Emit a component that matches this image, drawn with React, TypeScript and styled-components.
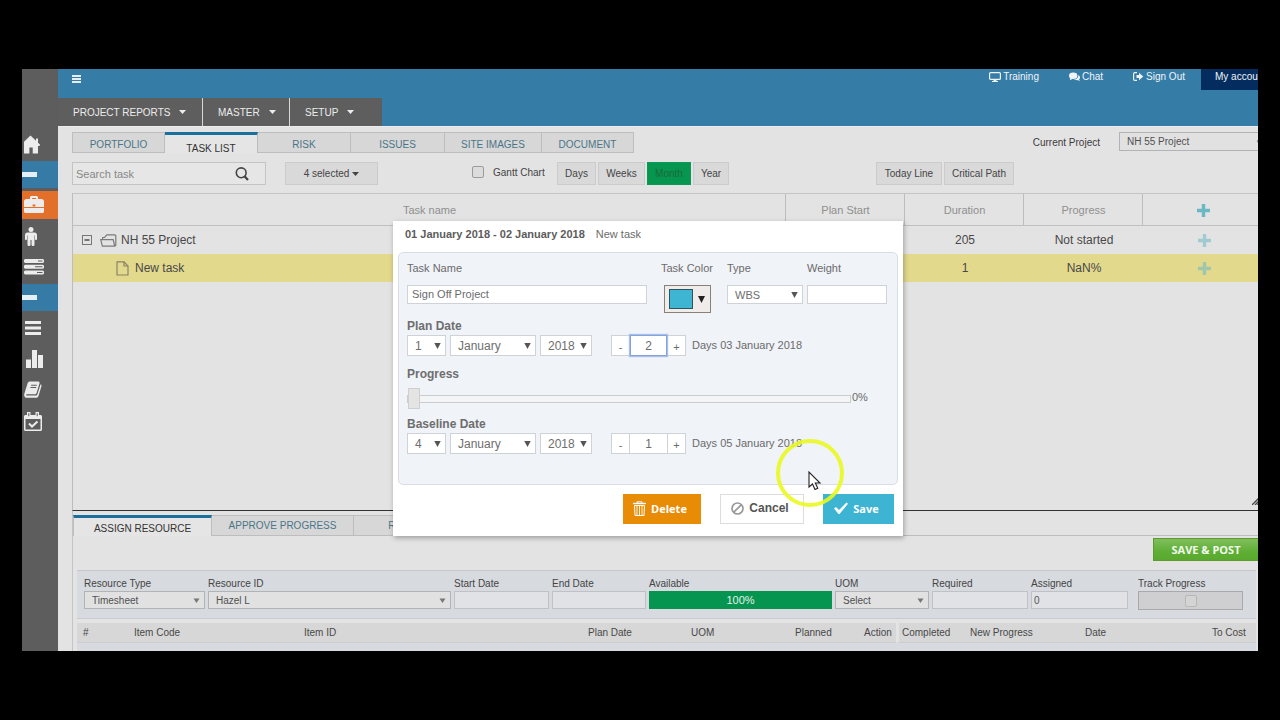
import React from 'react';
import styled, { createGlobalStyle, css } from 'styled-components';

const GlobalStyle = createGlobalStyle`
  *, *::before, *::after { box-sizing: border-box; }
  body { margin: 0; background: #000; }
  body, button, input, select, textarea {
    font-family: "Liberation Sans", Arial, sans-serif;
  }
  button, input, select { margin: 0; padding: 0; border-radius: 0; }
  a { text-decoration: none; color: inherit; }
`;

const Page = styled.div`
  min-height: 100vh;
  padding: 69px 22px;
  background: #000;
`;

const Frame = styled.div`
  position: relative;
  display: flex;
  overflow: hidden;
  background: #e3e3e3;
  font-size: 10px;
  line-height: 14px;
  color: #444;
`;

/* ---------- sidebar ---------- */

const Sidebar = styled.nav`
  flex: none;
  width: 36px;
  padding-top: 61px;
  display: flex;
  flex-direction: column;
  gap: 3px;
  background: #5d5d5d;
`;

const SideLink = styled.a<{ $active?: boolean }>`
  display: flex;
  align-items: center;
  height: 28px;
  padding-left: 2px;
  color: #ececec;
  background: ${p => (p.$active ? '#e2702a' : 'transparent')};
  svg { display: block; }
`;

const SideSection = styled.button`
  display: flex;
  align-items: center;
  height: 27px;
  border: 0;
  background: #357ba5;
  &::before {
    content: '';
    width: 15px;
    height: 5px;
    background: #e4eef4;
  }
`;

/* ---------- header ---------- */

const Body = styled.div`
  flex: 1;
  min-width: 0;
`;

const Header = styled.header`
  background: #357ca7;
  color: #f0f4f7;
`;

const TopBar = styled.div`
  display: flex;
  align-items: flex-start;
  height: 29px;
  padding-left: 14px;
`;

const MenuButton = styled.button`
  height: 20px;
  border: 0;
  background: none;
  color: #e6eef3;
  svg { display: block; }
`;

const TopLinks = styled.div`
  margin-left: auto;
  display: flex;
  gap: 30px;
`;

const TopLink = styled.a`
  display: flex;
  align-items: center;
  height: 15px;
  gap: 2px;
`;

const Account = styled.a`
  width: 57px;
  height: 21px;
  margin-left: 16px;
  padding-left: 14px;
  overflow: hidden;
  white-space: nowrap;
  line-height: 15px;
  background: #042c5e;
`;

const Menu = styled.nav`
  display: flex;
  height: 28px;
`;

const MenuItem = styled.button<{ $width: number }>`
  display: flex;
  align-items: center;
  gap: 9px;
  width: ${p => p.$width}px;
  padding-left: 15px;
  border: 0;
  background: #5e5e5e;
  color: #ececec;
  font-size: 10px;
  white-space: nowrap;
  & + & { border-left: 1px solid #d8d8d8; }
`;

/* ---------- tabs and toolbar ---------- */

const Main = styled.main`
  border-top: 1px solid #ebebf0;
  padding-left: 14px;
`;

const Tab = styled.button<{ $width: number; $active?: boolean; $low?: boolean }>`
  width: ${p => p.$width}px;
  height: 21px;
  border: 1px solid #bdbdbd;
  border-left-width: 0;
  background: #d7d7d7;
  color: #4b7587;
  font-size: 10px;
  line-height: 14px;
  padding-top: ${p => (p.$low ? 4 : 1)}px;
  white-space: nowrap;
  &:first-child { border-left-width: 1px; }
  ${p => p.$active && css`
    border-top: 3px solid #1a709c;
    border-bottom: 0;
    background: #e5e5e5;
    color: #333;
    padding-top: ${p.$low ? 7 : 4}px;
  `}
`;

const TabLine = styled.div`
  display: flex;
  align-items: stretch;
  padding-top: 5px;
`;

const TabFill = styled.div`
  flex: 1;
  border-bottom: 1px solid #bdbdbd;
`;

const ProjectPicker = styled.div`
  display: flex;
  gap: 19px;
  margin-left: auto;
  margin-right: -10px;
  line-height: 21px;
  color: #3c3c3c;
`;

const Toolbar = styled.div`
  display: flex;
  align-items: center;
  height: 23px;
  margin: 9px 0 8px;
`;

const SearchBox = styled.div`
  display: flex;
  align-items: center;
  width: 194px;
  height: 23px;
  padding-right: 16px;
  border: 1px solid #c4c4c4;
  background: #e6e6e6;
  color: #444;
`;

const SearchInput = styled.input`
  flex: 1;
  min-width: 0;
  padding-left: 3px;
  border: 0;
  outline: 0;
  background: none;
  font-size: 11px;
  &::placeholder { color: #888; opacity: 1; }
`;

const IconButton = styled.button`
  display: flex;
  border: 0;
  background: none;
  color: inherit;
`;

const GreyButton = styled.button<{ $width: number; $on?: boolean }>`
  display: flex;
  align-items: center;
  justify-content: center;
  gap: 3px;
  width: ${p => p.$width}px;
  height: 23px;
  border: 1px solid ${p => (p.$on ? '#0a9a58' : '#cbcbcb')};
  background: ${p => (p.$on ? '#06964f' : '#d9d9d9')};
  color: ${p => (p.$on ? '#1a6a3c' : '#444')};
  font-size: 10px;
  white-space: nowrap;
`;

const ButtonSet = styled.div<{ $before: number }>`
  display: flex;
  gap: 2px;
  margin-left: ${p => p.$before}px;
`;

const Check = styled.input`
  appearance: none;
  width: 12px;
  height: 12px;
  border: 1px solid #9b9b9b;
  border-radius: 2px;
  background: #dcdcdc;
`;

const ChartToggle = styled.label`
  display: flex;
  align-items: flex-start;
  gap: 9px;
  width: 85px;
  margin-left: 94px;
  height: 16px;
  white-space: nowrap;
`;

/* ---------- task grid ---------- */

const TaskArea = styled.section`
  position: relative;
  height: 317px;
  border-left: 1px solid #bcbcbc;
  border-top: 1px solid #c4c4c4;
  margin-right: -5px;
`;

const TaskTable = styled.table`
  width: 100%;
  border-collapse: separate;
  border-spacing: 0;
  table-layout: fixed;
  text-align: center;
  th {
    height: 32px;
    padding: 0 0 0 1px;
    border-bottom: 1px solid #c0c0c0;
    font-size: 11px;
    font-weight: 400;
    color: #8f8f8f;
  }
  th + th { border-left: 1px solid #bdbdbd; }
  td {
    height: 28px;
    padding: 0;
    font-size: 12px;
    color: #484848;
  }
  td + td { padding-left: 3px; }
  svg { vertical-align: middle; }
`;

const TaskRow = styled.tr<{ $selected?: boolean }>`
  background: ${p => (p.$selected ? '#e3d98d' : 'transparent')};
`;

const NameCell = styled.div<{ $level: number }>`
  display: flex;
  align-items: center;
  gap: ${p => (p.$level ? 6 : 4)}px;
  padding-left: ${p => (p.$level ? 43 : 9)}px;
  svg + svg { margin-left: 4px; }
`;

const AddButton = styled.button<{ $soft?: boolean }>`
  border: 0;
  background: none;
  color: #6bb8c4;
  opacity: ${p => (p.$soft ? 0.55 : 1)};
`;

const ResizeGrip = styled.svg`
  position: absolute;
  right: 4px;
  bottom: 5px;
`;

/* ---------- resources ---------- */

const Resources = styled.section`
  border-top: 1px solid #333;
  border-left: 1px solid #c4c4c4;
  padding-right: 2px;
`;

const ResourceTabs = styled.div`
  display: flex;
  padding-top: 4px;
  margin-right: -2px;
`;

const PostLine = styled.div`
  display: flex;
  justify-content: flex-end;
  height: 34px;
  padding-top: 2px;
  margin-right: -3px;
`;

const PostButton = styled.button`
  width: 106px;
  height: 23px;
  border: 1px solid #5d9c2a;
  background: linear-gradient(#7fbf5d, #5fae35 60%, #5aa92f);
  color: #f1f8ec;
  font: 700 11px "Open Sans", sans-serif;
`;

const ResourceForm = styled.form`
  display: grid;
  grid-template-columns: 121fr 243fr 95fr 94fr 183fr 94fr 96fr 97fr 112fr;
  column-gap: 3px;
  margin-left: 4px;
  padding: 6px 13px 8px 7px;
  border-top: 1px solid #c4c6c9;
  border-bottom: 1px solid #c9cbce;
  background: #d7dadf;
`;

const ResField = styled.div<{ $indent?: boolean }>`
  display: flex;
  flex-direction: column;
  min-width: 0;
  padding-left: ${p => (p.$indent ? 7 : 0)}px;
  white-space: nowrap;
`;

const ResInput = styled.input`
  width: 100%;
  height: 18px;
  padding-left: 2px;
  border: 1px solid #bfc1c4;
  background: #e0e2e5;
  font-size: 10px;
  color: #555;
`;

const Available = styled.output`
  display: block;
  height: 18px;
  line-height: 18px;
  text-align: center;
  background: #069551;
  color: #e2f2ea;
  font-size: 11px;
`;

const TrackBox = styled.div`
  display: flex;
  align-items: center;
  justify-content: center;
  height: 19px;
  border: 1px solid #a9a9ab;
  background: #cfcfd1;
  input { opacity: 0.45; }
`;

const ItemTable = styled.table`
  width: calc(100% - 4px);
  margin: 4px 0 0 4px;
  border-collapse: separate;
  border-spacing: 0;
  table-layout: fixed;
  th {
    height: 20px;
    padding: 0 0 0 6px;
    border-bottom: 1px solid #cdcdcf;
    background: #d7d7d7;
    font-size: 10px;
    font-weight: 400;
    text-align: left;
    white-space: nowrap;
    color: #484848;
  }
  th:nth-child(8) {
    padding-left: 3px;
    border-left: 3px solid #e3e3e3;
  }
  td {
    height: 8px;
    padding: 0;
    background: #d7dadf;
  }
`;

/* ---------- drop-downs ---------- */

const SelectWrap = styled.span<{ $width?: number; $height: number }>`
  position: relative;
  display: block;
  width: ${p => (p.$width ? p.$width + 'px' : '100%')};
  height: ${p => p.$height}px;
  svg {
    position: absolute;
    right: 5px;
    top: 50%;
    transform: translateY(-50%);
    pointer-events: none;
  }
`;

const NativeSelect = styled.select<{ $tone: 'page' | 'dialog'; $size: number }>`
  appearance: none;
  display: block;
  width: 100%;
  height: 100%;
  padding-left: 7px;
  font-size: ${p => p.$size}px;
  border: 1px solid ${p => (p.$tone === 'page' ? '#b2b3b5' : '#cfd2d6')};
  background: ${p => (p.$tone === 'page' ? '#e1e1e2' : '#fff')};
  color: ${p => (p.$tone === 'page' ? '#505050' : '#6e6e6e')};
`;

type DropProps = {
  id?: string;
  label?: string;
  value: string;
  width?: number;
  height: number;
  size: number;
  tone: 'page' | 'dialog';
};

const Drop = ({ id, label, value, width, height, size, tone }: DropProps) => (
  <SelectWrap $width={width} $height={height}>
    <NativeSelect id={id} aria-label={label} $tone={tone} $size={size} defaultValue={value}>
      <option>{value}</option>
    </NativeSelect>
    <svg width="7" height="6" viewBox="0 0 7 6">
      {tone === 'page'
        ? <path d="M.5 1.500h6L3.500 6z" fill="#777" />
        : <path d="M.3 0h6.400L3.500 6z" fill="#555" />}
    </svg>
  </SelectWrap>
);

/* ---------- dialog ---------- */

const Dialog = styled.div`
  position: absolute;
  top: 152px;
  left: 371px;
  width: 510px;
  padding: 0 5px 12px;
  background: #fff;
  box-shadow: 1px 2px 5px rgba(0, 0, 0, 0.3);
  font-size: 11px;
  color: #6b6b6b;
`;

const DialogTitle = styled.h2`
  display: flex;
  gap: 11px;
  height: 31px;
  margin: 0;
  padding: 6px 7px 0;
  font-size: 11px;
  font-weight: 400;
  line-height: 14px;
  strong { color: #5c5c5c; }
`;

const DialogPanel = styled.div`
  padding: 8px 9px 30px 8px;
  border: 1px solid #d9dee6;
  border-radius: 5px;
  background: #f0f3f8;
`;

const TopFields = styled.div`
  display: flex;
  align-items: flex-start;
  height: 52px;
`;

const Field = styled.div<{ $width: number; $after?: number; $inset?: number }>`
  display: flex;
  flex-direction: column;
  align-items: flex-start;
  gap: 10px;
  width: ${p => p.$width}px;
  margin-right: ${p => p.$after || 0}px;
  & > button { margin-left: ${p => p.$inset || 0}px; }
`;

const TextInput = styled.input`
  width: 100%;
  height: 19px;
  padding: 0 0 2px 4px;
  border: 1px solid #cfd2d6;
  background: #fff;
  color: #6b6b6b;
  font-size: 11px;
`;

const ColorButton = styled.button`
  display: flex;
  align-items: center;
  gap: 5px;
  width: 47px;
  height: 28px;
  padding-left: 4px;
  border: 1px solid #8b7f7a;
  background: #f0ece9;
  &::before {
    content: '';
    width: 24px;
    height: 20px;
    border: 1px solid #2c5561;
    background: #3db5d3;
  }
`;

const Group = styled.fieldset<{ $before: number }>`
  min-width: 0;
  margin: ${p => p.$before}px 0 0;
  padding: 0;
  border: 0;
  legend {
    padding: 0;
    height: 16px;
    font-size: 12px;
    font-weight: 700;
    line-height: 14px;
    color: #6e6e6e;
  }
`;

const DateLine = styled.div`
  display: flex;
  align-items: center;
  height: 21px;
  gap: 4px;
`;

const EndDate = styled.span`
  padding-bottom: 2px;
`;

const Stepper = styled.div`
  display: flex;
  height: 21px;
  margin: 0 2px 0 15px;
`;

const StepButton = styled.button`
  width: 19px;
  height: 21px;
  padding-top: 3px;
  border: 1px solid #cfd2d6;
  background: #fff;
  color: #6b6b6b;
  font-size: 11px;
`;

const StepInput = styled.input<{ $focused?: boolean }>`
  width: 37px;
  height: 21px;
  text-align: center;
  border: 1px solid #cfd2d6;
  border-width: 1px 0;
  background: #fff;
  color: #6b6b6b;
  font-size: 12px;
  ${p => p.$focused && css`
    border: 1px solid #86a4dc;
    box-shadow: 0 0 1px 1px #a9bfe8;
    z-index: 1;
  `}
`;

const SliderLine = styled.div`
  display: flex;
  align-items: center;
  height: 21px;
  margin-top: 5px;
  output { padding: 0 0 4px 1px; }
`;

const Slider = styled.input`
  appearance: none;
  width: 444px;
  height: 21px;
  background: none;
  &::-webkit-slider-runnable-track {
    height: 8px;
    border: 1px solid #ccc;
    background: #f3f4f6;
  }
  &::-webkit-slider-thumb {
    appearance: none;
    width: 12px;
    height: 21px;
    margin-top: -8px;
    border: 1px solid #cfcfcf;
    background: #e4e4e4;
  }
`;

const Actions = styled.div`
  display: flex;
  justify-content: flex-end;
  gap: 19px;
  margin: 9px 4px 0 0;
`;

const ActionButton = styled.button<{ $kind: 'delete' | 'cancel' | 'save' }>`
  display: flex;
  align-items: center;
  justify-content: center;
  gap: 5px;
  height: 30px;
  width: ${p => ({ delete: 78, cancel: 84, save: 71 })[p.$kind]}px;
  border: 1px solid ${p => ({ delete: '#e88c05', cancel: '#ddd', save: '#3db4d2' })[p.$kind]};
  background: ${p => ({ delete: '#e88c05', cancel: '#fff', save: '#3db4d2' })[p.$kind]};
  color: ${p => (p.$kind === 'cancel' ? '#555' : '#fff')};
  font: 700 ${p => (p.$kind === 'cancel' ? '12px "Liberation Sans"' : '11px "Open Sans"')}, sans-serif;
  padding: 0 4px 2px 0;
`;

const ClickRing = styled.svg`
  position: absolute;
  left: 751px;
  top: 367px;
  pointer-events: none;
`;

/* ---------- icons ---------- */

const Caret = ({ w = 7 }: { w?: number }) => (
  <svg width={w} height="4" viewBox="0 0 8 4" preserveAspectRatio="none"><path d="M0 0h8L4 4z" fill="currentColor" /></svg>
);

const HomeIcon = () => (
  <svg width="18" height="19" viewBox="0 0 18 19">
    <path fill="currentColor" d="M6.500.5L12 5.700V3.500h2v4.200l2.200 2-.9 1.200H14V18.500H8.700v-6H5.400v6H0V6.700z" />
  </svg>
);
const BriefcaseIcon = () => (
  <svg width="20" height="18" viewBox="0 0 20 18">
    <path fill="currentColor" fillRule="evenodd" d="M6 3V1.500C6 .7 6.700 0 7.500 0h5c.8 0 1.500.7 1.500 1.500V3h3.500C18.900 3 20 4.100 20 5.500V11H0V5.500C0 4.100 1.100 3 2.500 3zM8 2v1h4V2zM8.600 8.500v2h2.800v-2z" />
    <path fill="currentColor" d="M0 12h20v3.500c0 .8-.7 1.500-1.500 1.500h-17C.7 17 0 16.300 0 15.500z" />
  </svg>
);
const PersonIcon = () => (
  <svg width="14" height="19" viewBox="-1 0 14 19">
    <circle cx="6" cy="2.500" r="2.500" fill="currentColor" />
    <path fill="currentColor" d="M2.500 5.500h7c1.400 0 2.500 1 2.500 2.500v4c0 1.400-2 1.400-2 0V8.500h-.5v9c0 2-3 2-3 0V13h-1v4.500c0 2-3 2-3 0v-9H2V12c0 1.400-2 1.400-2 0V8c0-1.500 1.100-2.500 2.500-2.500z" />
  </svg>
);
const ServerIcon = () => (
  <svg width="20" height="16" viewBox="0 0 20 16">
    <path fill="currentColor" d="M1 0h18l1 1v2l-1 1H1L0 3V1zM1 5.700h18l1 1v2l-1 1H1l-1-1v-2zM1 11.500h18l1 1v2l-1 1H1l-1-1v-2z" />
    <path fill="#5d5d5d" d="M14 1.500h4.500v1H14zM11 7.200h7.500v1H11zM13 13h5.500v1H13z" />
  </svg>
);
const ListIcon = () => (
  <svg width="18" height="14" viewBox="0 0 18 14"><path fill="currentColor" d="M1 0h16v3H1zM1 5.500h16v3H1zM1 11h16v3H1z" /></svg>
);
const ChartIcon = () => (
  <svg width="20" height="18" viewBox="0 0 20 18"><path fill="currentColor" d="M2 9.500h5V18H2zM8 0h5v18H8zM14 5h5v13h-5z" /></svg>
);
const BookIcon = () => (
  <svg width="18" height="18" viewBox="0 0 19 18">
    <path fill="currentColor" d="M6.500 0H15c1 0 1.700.9 1.400 1.900l-3.100 10.200c-.3.900-1 1.400-1.900 1.400H3c-.8 0-1.300 1-.2 1.400h9.500c.9 0 1.600-.5 1.900-1.300L17.500 3c1 .5 1.200 1.200.9 2l-3.200 10.600c-.3.900-1.200 1.600-2.200 1.600H3.100C1 17.200-.3 15.200.3 13.200L3.800 2C4.200.7 5.200 0 6.500 0z" />
    <path stroke="#5d5d5d" strokeWidth="1.100" d="M7.500 3.900h6M6.800 6.300h6" />
  </svg>
);
const CalendarIcon = () => (
  <svg width="18" height="19" viewBox="0 0 18 19">
    <path fill="currentColor" fillRule="evenodd" d="M1 3h16l1 1v14l-1 1H1l-1-1V4zM1.500 7V17.500h15V7z" />
    <path fill="currentColor" d="M3 0h3.500v5H3zM11.500 0H15v5h-3.500z" />
    <path stroke="#5d5d5d" d="M4.800 1.200v3M13.200 1.200v3" />
    <path fill="none" stroke="currentColor" strokeWidth="2" d="M5 11.500l3 3 5.500-5" />
  </svg>
);
const MonitorIcon = () => (
  <svg width="12" height="10" viewBox="0 0 12 10">
    <rect x=".6" y=".6" width="10.800" height="6.800" rx="1" fill="none" stroke="currentColor" strokeWidth="1.200" />
    <path fill="currentColor" d="M4.500 7.500h3v1.500H9v1H3V9h1.500z" />
  </svg>
);
const ChatIcon = () => (
  <svg width="11" height="10" viewBox="0 0 11 10">
    <ellipse cx="4.200" cy="3.800" rx="4.200" ry="3.200" fill="currentColor" />
    <path fill="currentColor" d="M1.500 5.500L.8 8.200 4 6.800zM9.200 3c2.200 1.200 2.300 3.200.8 4.300l.8 1.700-2.600-.9C6.800 8.300 5.500 8 5 7.600c2.500-.2 4.600-2 4.200-4.600z" />
  </svg>
);
const SignOutIcon = () => (
  <svg width="11" height="9" viewBox="0 0 11 9">
    <path fill="none" stroke="currentColor" strokeWidth="1.200" d="M4 .6H1.800C1.100.6.6 1.100.6 1.800v5.400c0 .7.500 1.200 1.200 1.200H4" />
    <path fill="currentColor" d="M3.500 3H6V.8l4.300 3.700L6 8.200V6H3.500z" />
  </svg>
);
const SearchIcon = () => (
  <svg width="14" height="14" viewBox="0 0 14 14" fill="none" stroke="currentColor">
    <circle cx="6.200" cy="5.800" r="4.900" strokeWidth="1.600" /><path strokeWidth="2.200" d="M9.300 9l3.700 4" />
  </svg>
);
const CollapseIcon = () => (
  <svg width="10" height="10" viewBox="0 0 10 10"><rect x=".5" y=".5" width="9" height="9" fill="none" stroke="#777" /><path stroke="#444" strokeWidth="1.400" d="M2.500 5h5" /></svg>
);
const FolderIcon = () => (
  <svg width="17" height="13" viewBox="0 0 17 13" fill="none" stroke="#7b7b7b" strokeWidth="1.200">
    <path d="M2.600 5V3.500h2L6.800.8h8l1 1v9.400l-1 1H2.400L.7 5.600h12.500l1.500 6.400" />
  </svg>
);
const FileIcon = () => (
  <svg width="13" height="15" viewBox="0 0 13 15" fill="none" stroke="#8a8365" strokeWidth="1.200">
    <path d="M1 .8h7L12 5v9H1z" /><path d="M8 .8V5h4" />
  </svg>
);
const PlusIcon = () => (
  <svg width="13" height="13" viewBox="0 0 13 13"><path fill="currentColor" d="M4.800 0h3.400v4.800H13v3.400H8.200V13H4.800V8.200H0V4.800h4.800z" /></svg>
);
const TrashIcon = () => (
  <svg width="13" height="15" viewBox="0 0 13 15" fill="none" stroke="currentColor">
    <path strokeWidth="1.400" d="M0 2.500h13" /><path d="M4 2.200V.8h5v1.400M1.500 4.500h10l-.5 10H2z" /><path strokeWidth=".9" d="M4 5v9M6.500 5v9M9 5v9" />
  </svg>
);
const BanIcon = () => (
  <svg width="13" height="13" viewBox="0 0 13 13" fill="none" stroke="#999" strokeWidth="1.700"><circle cx="6.500" cy="6.500" r="5.500" /><path d="M2.800 10.200l7.400-7.400" /></svg>
);
const CheckIcon = () => (
  <svg width="14" height="12" viewBox="0 0 14 12"><path fill="currentColor" d="M0 6.500l2-1.500 3 3L12.500.5 14 1.800 5.500 12H4.500z" /></svg>
);

const DateRow = ({ day, days, end, focused }: { day: string; days: string; end: string; focused?: boolean }) => (
  <DateLine>
    <Drop tone="dialog" label="Day" value={day} width={39} height={21} size={12} />
    <Drop tone="dialog" label="Month" value="January" width={86} height={21} size={12} />
    <Drop tone="dialog" label="Year" value="2018" width={52} height={21} size={12} />
    <Stepper>
      <StepButton type="button" aria-label="Fewer days">-</StepButton>
      <StepInput aria-label="Days" defaultValue={days} $focused={focused} />
      <StepButton type="button" aria-label="More days">+</StepButton>
    </Stepper>
    <EndDate>Days {end}</EndDate>
  </DateLine>
);

const itemColumns: [string, number][] = [
  ['#', 51], ['Item Code', 170], ['Item ID', 284], ['Plan Date', 103], ['UOM', 104], ['Planned', 69],
  ['Action', 38], ['Completed', 68], ['New Progress', 115], ['Date', 127], ['To Cost', 50],
];

const Col = styled.col<{ $width?: number }>`
  width: ${p => (p.$width ? p.$width + 'px' : 'auto')};
`;

export default function App() {
  return (
    <Page>
      <GlobalStyle />
      <Frame>
        <Sidebar>
          <SideLink href="#home" aria-label="Home"><HomeIcon /></SideLink>
          <SideSection aria-label="Collapse projects" />
          <SideLink href="#projects" aria-label="Projects" $active><BriefcaseIcon /></SideLink>
          <SideLink href="#people" aria-label="People"><PersonIcon /></SideLink>
          <SideLink href="#tasks" aria-label="Tasks"><ServerIcon /></SideLink>
          <SideSection aria-label="Collapse reports" />
          <SideLink href="#list" aria-label="List"><ListIcon /></SideLink>
          <SideLink href="#charts" aria-label="Charts"><ChartIcon /></SideLink>
          <SideLink href="#library" aria-label="Library"><BookIcon /></SideLink>
          <SideLink href="#calendar" aria-label="Calendar"><CalendarIcon /></SideLink>
        </Sidebar>

        <Body>
          <Header>
            <TopBar>
              <MenuButton aria-label="Menu">
                <svg width="9" height="8" viewBox="0 0 9 8"><path fill="currentColor" d="M0 0h9v2H0zM0 3h9v2H0zM0 6h9v2H0z" /></svg>
              </MenuButton>
              <TopLinks>
                <TopLink href="#training"><MonitorIcon />Training</TopLink>
                <TopLink href="#chat"><ChatIcon />Chat</TopLink>
                <TopLink href="#signout"><SignOutIcon />Sign Out</TopLink>
              </TopLinks>
              <Account href="#account">My account</Account>
            </TopBar>
            <Menu>
              <MenuItem $width={144}>PROJECT REPORTS <Caret /></MenuItem>
              <MenuItem $width={87}>MASTER <Caret /></MenuItem>
              <MenuItem $width={93}>SETUP <Caret /></MenuItem>
            </Menu>
          </Header>

          <Main>
            <TabLine>
              <Tab $width={93} $low>PORTFOLIO</Tab>
              <Tab $width={93} $low $active>TASK LIST</Tab>
              <Tab $width={93} $low>RISK</Tab>
              <Tab $width={94} $low>ISSUES</Tab>
              <Tab $width={97} $low>SITE IMAGES</Tab>
              <Tab $width={92} $low>DOCUMENT</Tab>
              <ProjectPicker>
                <label htmlFor="project">Current Project</label>
                <Drop id="project" tone="page" value="NH 55 Project" width={149} height={19} size={10} />
              </ProjectPicker>
            </TabLine>

            <Toolbar>
              <SearchBox>
                <SearchInput type="search" aria-label="Search task" placeholder="Search task" />
                <IconButton aria-label="Search"><SearchIcon /></IconButton>
              </SearchBox>
              <ButtonSet $before={19}>
                <GreyButton $width={93}>4 selected <Caret /></GreyButton>
              </ButtonSet>
              <ChartToggle><Check type="checkbox" />Gantt Chart</ChartToggle>
              <ButtonSet $before={0}>
                <GreyButton $width={39}>Days</GreyButton>
                <GreyButton $width={47}>Weeks</GreyButton>
                <GreyButton $width={44} $on>Month</GreyButton>
                <GreyButton $width={36}>Year</GreyButton>
              </ButtonSet>
              <ButtonSet $before={147}>
                <GreyButton $width={66}>Today Line</GreyButton>
                <GreyButton $width={70}>Critical Path</GreyButton>
              </ButtonSet>
            </Toolbar>

            <TaskArea>
              <TaskTable>
                <colgroup>
                  <Col /><Col $width={119} /><Col $width={119} /><Col $width={119} /><Col $width={121} />
                </colgroup>
                <thead>
                  <tr>
                    <th>Task name</th>
                    <th>Plan Start</th>
                    <th>Duration</th>
                    <th>Progress</th>
                    <th><AddButton aria-label="Add task"><PlusIcon /></AddButton></th>
                  </tr>
                </thead>
                <tbody>
                  <TaskRow>
                    <td><NameCell $level={0}><CollapseIcon /><FolderIcon />NH 55 Project</NameCell></td>
                    <td />
                    <td>205</td>
                    <td>Not started</td>
                    <td><AddButton $soft aria-label="Add to NH 55 Project"><PlusIcon /></AddButton></td>
                  </TaskRow>
                  <TaskRow $selected>
                    <td><NameCell $level={1}><FileIcon />New task</NameCell></td>
                    <td />
                    <td>1</td>
                    <td>NaN%</td>
                    <td><AddButton $soft aria-label="Add to New task"><PlusIcon /></AddButton></td>
                  </TaskRow>
                </tbody>
              </TaskTable>
              <ResizeGrip width="7" height="7" viewBox="0 0 7 7"><path stroke="#444" strokeWidth="1.300" d="M0 7l7-7M3 7l4-4M5.500 7L7 5.500" /></ResizeGrip>
            </TaskArea>

            <Resources>
              <ResourceTabs>
                <Tab $width={139} $active>ASSIGN RESOURCE</Tab>
                <Tab $width={142}>APPROVE PROGRESS</Tab>
                <Tab $width={93}>RISK</Tab>
                <TabFill />
              </ResourceTabs>
              <PostLine><PostButton>SAVE &amp; POST</PostButton></PostLine>

              <ResourceForm>
                <ResField><label htmlFor="rtype">Resource Type</label><Drop id="rtype" tone="page" value="Timesheet" height={18} size={10} /></ResField>
                <ResField><label htmlFor="rid">Resource ID</label><Drop id="rid" tone="page" value="Hazel L" height={18} size={10} /></ResField>
                <ResField><label htmlFor="start">Start Date</label><ResInput id="start" /></ResField>
                <ResField><label htmlFor="end">End Date</label><ResInput id="end" /></ResField>
                <ResField><label htmlFor="avail">Available</label><Available id="avail">100%</Available></ResField>
                <ResField><label htmlFor="uom">UOM</label><Drop id="uom" tone="page" value="Select" height={18} size={10} /></ResField>
                <ResField><label htmlFor="req">Required</label><ResInput id="req" /></ResField>
                <ResField><label htmlFor="asg">Assigned</label><ResInput id="asg" defaultValue="0" /></ResField>
                <ResField $indent><label htmlFor="track">Track Progress</label><TrackBox><Check id="track" type="checkbox" /></TrackBox></ResField>
              </ResourceForm>

              <ItemTable>
                <colgroup>{itemColumns.map(([name, w]) => <Col key={name} $width={w} />)}</colgroup>
                <thead><tr>{itemColumns.map(([name]) => <th key={name}>{name}</th>)}</tr></thead>
                <tbody><tr><td colSpan={itemColumns.length} /></tr></tbody>
              </ItemTable>
            </Resources>
          </Main>
        </Body>

        <Dialog role="dialog" aria-label="Edit task">
          <DialogTitle><strong>01 January 2018 - 02 January 2018</strong><span>New task</span></DialogTitle>
          <DialogPanel>
            <TopFields>
              <Field $width={240} $after={14}>
                <label htmlFor="tname">Task Name</label>
                <TextInput id="tname" defaultValue="Sign Off Project" />
              </Field>
              <Field $width={53} $after={13} $inset={3}>
                <label htmlFor="tcolor">Task Color</label>
                <ColorButton id="tcolor" type="button"><svg width="7" height="7" viewBox="0 0 7 7"><path d="M0 0h7L3.500 7z" fill="#222" /></svg></ColorButton>
              </Field>
              <Field $width={76} $after={4}>
                <label htmlFor="ttype">Type</label>
                <Drop id="ttype" tone="dialog" value="WBS" width={76} height={19} size={11} />
              </Field>
              <Field $width={80}>
                <label htmlFor="tweight">Weight</label>
                <TextInput id="tweight" />
              </Field>
            </TopFields>
            <Group $before={6}>
              <legend>Plan Date</legend>
              <DateRow day="1" days="2" end="03 January 2018" focused />
            </Group>
            <Group $before={11}>
              <legend>Progress</legend>
              <SliderLine>
                <Slider type="range" min="0" max="100" defaultValue="0" aria-label="Progress" />
                <output>0%</output>
              </SliderLine>
            </Group>
            <Group $before={8}>
              <legend>Baseline Date</legend>
              <DateRow day="4" days="1" end="05 January 2018" />
            </Group>
          </DialogPanel>
          <Actions>
            <ActionButton $kind="delete"><TrashIcon />Delete</ActionButton>
            <ActionButton $kind="cancel"><BanIcon />Cancel</ActionButton>
            <ActionButton $kind="save"><CheckIcon />Save</ActionButton>
          </Actions>
        </Dialog>

        <ClickRing width="74" height="74" viewBox="0 0 74 74">
          <circle cx="37" cy="37" r="32" fill="none" stroke="#e9f820" strokeWidth="4" opacity=".9" />
          <path d="M36 36v15l3.500-3 2.500 5.500 2.800-1.200-2.500-5.300H47z" fill="#fff" stroke="#222" strokeWidth="1.100" />
        </ClickRing>
      </Frame>
    </Page>
  );
}
